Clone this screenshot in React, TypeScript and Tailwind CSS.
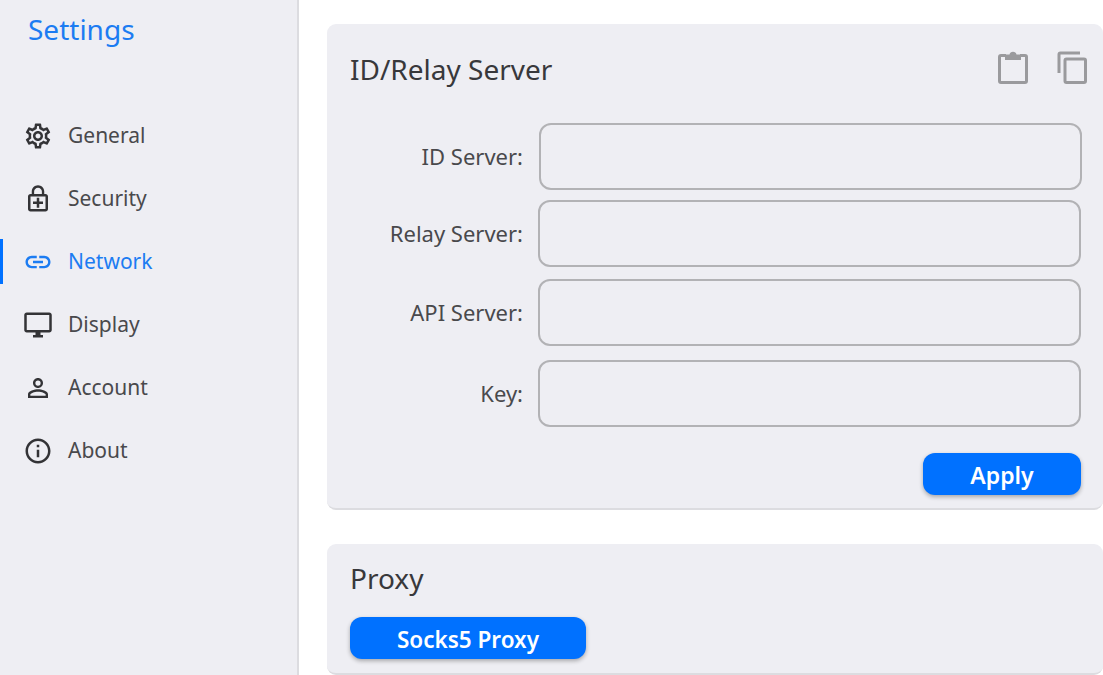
import React from "react";
import {
  MdOutlineSettings,
  MdOutlineEnhancedEncryption,
  MdLink,
  MdOutlineDesktopWindows,
  MdPersonOutline,
  MdInfoOutline,
} from "react-icons/md";

const nav = [
  { label: "General", Icon: MdOutlineSettings },
  { label: "Security", Icon: MdOutlineEnhancedEncryption },
  { label: "Network", Icon: MdLink, active: true },
  { label: "Display", Icon: MdOutlineDesktopWindows },
  { label: "Account", Icon: MdPersonOutline },
  { label: "About", Icon: MdInfoOutline },
];

const fields = [
  { label: "ID Server:", cls: "mr-[21px] mb-[10px]", input: "ml-[1px]" },
  { label: "Relay Server:", cls: "mr-[22px] mb-[12px]", input: "" },
  { label: "API Server:", cls: "mr-[22px] mb-[14px]", input: "" },
  { label: "Key:", cls: "mr-[22px]", input: "" },
];

function ClipboardIcon() {
  return (
    <svg width="30" height="33" viewBox="0 0 30 33" fill="none" className="block">
      <path d="M8 4.5H3a1.5 1.5 0 0 0-1.5 1.5v24A1.5 1.5 0 0 0 3 31.500h24a1.500 1.500 0 0 0 1.500-1.500V6A1.500 1.500 0 0 0 27 4.500h-5" stroke="currentColor" strokeWidth="3" />
      <path d="M7 3.500h4.500a3.600 3.600 0 0 1 7 0H23V9H7z" fill="currentColor" />
    </svg>
  );
}

function CopyIcon() {
  return (
    <svg width="30" height="33" viewBox="0 0 30 33" fill="none" className="block">
      <path d="M23 2H3.500A1.500 1.500 0 0 0 2 3.500V22" stroke="currentColor" strokeWidth="3" />
      <rect x="8" y="8" width="20.500" height="23.500" rx="1.500" stroke="currentColor" strokeWidth="3" />
    </svg>
  );
}

export default function App() {
  return (
    <div className="flex h-[675px] w-[1103px] overflow-hidden bg-white font-['Noto_Sans','Open_Sans',sans-serif] text-[#3a3a3c]">
      <aside className="flex w-[299px] shrink-0 flex-col border-r-2 border-[#dcdce0] bg-[#eeeef3]">
        <h1 className="ml-[28px] mt-[9px] h-[40px] text-[28px] leading-[40px] text-[#1c7cf2]">Settings</h1>
        <nav className="mt-[55px] flex flex-col">
          {nav.map(({ label, Icon, active }) => (
            <div key={label} className="relative flex h-[63px] items-center">
              {active && <span className="absolute left-0 top-[9px] h-[45px] w-[3px] bg-[#0071ff]" />}
              <Icon className={`ml-[23px] shrink-0 text-[30px] ${active ? "text-[#1c7cf2]" : "text-[#333336]"}`} />
              <span className={`ml-[15px] text-[21px] leading-none ${active ? "text-[#1c7cf2]" : "text-[#49494c]"}`}>{label}</span>
            </div>
          ))}
        </nav>
      </aside>
      <main className="flex min-w-0 flex-1 flex-col pl-[28px] pt-[24px]">
        <section className="h-[486px] w-[776px] shrink-0 rounded-[9px] border-b-2 border-[#dcdce0] bg-[#eeeef3] pl-[23px]">
          <div className="flex h-[99px] items-start justify-between">
            <h2 className="mt-[26px] text-[28px] leading-[38px] text-[#38383b]">ID/Relay Server</h2>
            <div className="mr-[16px] mt-[27px] flex items-start gap-[29px] text-[#9a9a9d]">
              <ClipboardIcon />
              <CopyIcon />
            </div>
          </div>
          <div className="flex flex-col">
            {fields.map((f) => (
              <div key={f.label} className={`flex items-center ${f.cls}`}>
                <label className="w-[188px] shrink-0 pb-[2px] pr-[15px] text-right text-[22px] leading-none text-[#49494c]">{f.label}</label>
                <input className={`h-[67px] min-w-0 flex-1 rounded-[12px] border-2 border-[#b2b2b5] bg-transparent ${f.input}`} />
              </div>
            ))}
          </div>
          <div className="mr-[22px] mt-[26px] flex justify-end">
            <button className="h-[42px] w-[158px] rounded-[12px] bg-[#0071ff] pt-[3px] text-[23px] font-semibold leading-none text-white shadow-[0_2px_4px_rgba(0,0,0,0.3)]">Apply</button>
          </div>
        </section>
        <section className="mt-[34px] h-[131px] w-[776px] shrink-0 rounded-[9px] border-b-2 border-[#dcdce0] bg-[#eeeef3] pl-[23px]">
          <h2 className="mt-[15px] text-[28px] leading-[38px] text-[#38383b]">Proxy</h2>
          <button className="mt-[20px] h-[42px] w-[236px] rounded-[12px] bg-[#0071ff] pt-[4px] text-[22.5px] font-semibold leading-none text-white shadow-[0_2px_4px_rgba(0,0,0,0.3)]">Socks5 Proxy</button>
        </section>
      </main>
    </div>
  );
}
